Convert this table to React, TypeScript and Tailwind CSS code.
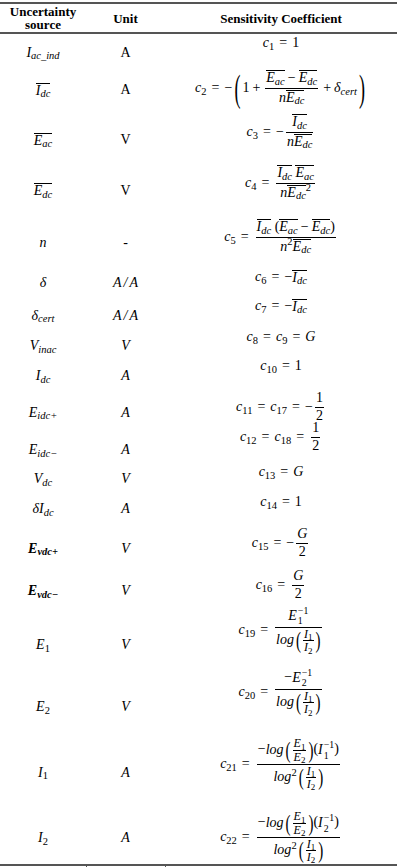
import React from "react";

type N = React.ReactNode;

const X = ({ b, s, bold }: { b: N; s?: N; bold?: boolean }) => (
  <span className={bold ? "italic font-bold" : "italic"}>
    {b}
    {s !== undefined && <sub>{s}</sub>}
  </span>
);
const U = ({ children }: { children: N }) => <span className="not-italic">{children}</span>;
const O = ({ children }: { children: N }) => (
  <span className="inline-block border-t border-black leading-none">{children}</span>
);
const Eq = () => <span className="mx-[5px] not-italic">=</span>;
const Op = ({ c }: { c: string }) => <span className="mx-[3px] not-italic">{c}</span>;
const M = "\u2212";

const F = ({ n, d, small, tight }: { n: N; d: N; small?: boolean; tight?: boolean }) => (
  <span
    className={
      "inline-flex flex-col items-center mx-[2px] align-middle " +
      (small ? "text-[12px] leading-[1.05]" : tight ? "leading-[1.15]" : "leading-[1.3]")
    }
  >
    <span className="px-[1px] whitespace-nowrap">{n}</span>
    <span className="self-stretch border-t border-black" />
    <span className="px-[1px] whitespace-nowrap">{d}</span>
  </span>
);

const BP = ({ c, cls }: { c: string; cls: string }) => (
  <span className={"inline-block not-italic leading-none " + cls}>{c}</span>
);

const P = ({ children }: { children: N }) => (
  <span className="inline-flex items-center align-middle">
    <BP c="(" cls="text-[15px] scale-y-[1.6]" />
    {children}
    <BP c=")" cls="text-[15px] scale-y-[1.6]" />
  </span>
);

const SS = ({ b, sub, sup }: { b: N; sub: N; sup: N }) => (
  <span className="italic">
    {b}
    <span className="inline-flex flex-col align-[0.55em] text-[0.7em] leading-[1.05] not-italic ml-[1px]">
      <span>{sup}</span>
      <span>{sub}</span>
    </span>
  </span>
);

const Fm = ({ children }: { children: N }) => (
  <span className="inline-flex items-center whitespace-nowrap text-[14px]">{children}</span>
);

const C = ({ k }: { k: string }) => <X b="c" s={<U>{k}</U>} />;

const AA = () => (
  <i>
    A<span className="mx-[2px]">/</span>A
  </i>
);

const Idc = () => (
  <O>
    <X b="I" s="dc" />
  </O>
);
const Eac = () => (
  <O>
    <X b="E" s="ac" />
  </O>
);
const Edc = () => (
  <O>
    <X b="E" s="dc" />
  </O>
);
const I1I2 = () => (
  <P>
    <F small n={<X b="I" s={<U>1</U>} />} d={<X b="I" s={<U>2</U>} />} />
  </P>
);
const E1E2 = () => (
  <P>
    <F small n={<X b="E" s={<U>1</U>} />} d={<X b="E" s={<U>2</U>} />} />
  </P>
);
const Log = () => <i className="mr-[2px]">log</i>;

type Row = { h: string; l: N; lp: string; u: N; f: N; fp: string };

const rows: Row[] = [
  {
    h: "h-[37px]",
    l: <X b="I" s="ac_ind" />,
    lp: "",
    u: <U>A</U>,
    f: (
      <Fm>
        <C k="1" />
        <Eq />
        <U>1</U>
      </Fm>
    ),
    fp: "pb-[19px]",
  },
  {
    h: "h-[44px]",
    l: <Idc />,
    lp: "pb-[6px]",
    u: <U>A</U>,
    f: (
      <Fm>
        <C k="2" />
        <Eq />
        <U>{M}</U>
        <BP c="(" cls="text-[18px] scale-y-[2.1] mx-[2px]" />
        <U>1</U>
        <Op c="+" />
        <F
          n={
            <>
              <Eac />
              <Op c={M} />
              <Edc />
            </>
          }
          d={
            <>
              <i>n</i>
              <Edc />
            </>
          }
        />
        <Op c="+" />
        <X b={"\u03b4"} s="cert" />
        <BP c=")" cls="text-[18px] scale-y-[2.1] mx-[2px]" />
      </Fm>
    ),
    fp: "pb-[10px]",
  },
  {
    h: "h-[50px]",
    l: <Eac />,
    lp: "",
    u: <U>V</U>,
    f: (
      <Fm>
        <C k="3" />
        <Eq />
        <U>{M}</U>
        <F
          n={<Idc />}
          d={
            <>
              <i>n</i>
              <Edc />
            </>
          }
        />
      </Fm>
    ),
    fp: "pb-[16px]",
  },
  {
    h: "h-[51px]",
    l: <Edc />,
    lp: "",
    u: <U>V</U>,
    f: (
      <Fm>
        <C k="4" />
        <Eq />
        <F
          n={
            <>
              <Idc /> <Eac />
            </>
          }
          d={
            <>
              <i>n</i>
              <Edc />
              <sup>2</sup>
            </>
          }
        />
      </Fm>
    ),
    fp: "pb-[15px]",
  },
  {
    h: "h-[47px]",
    l: <i>n</i>,
    lp: "pt-[7px]",
    u: <U>-</U>,
    f: (
      <Fm>
        <C k="5" />
        <Eq />
        <F
          n={
            <>
              <Idc /> <U>(</U>
              <Eac />
              <Op c={M} />
              <Edc />
              <U>)</U>
            </>
          }
          d={
            <>
              <i>n</i>
              <sup>2</sup>
              <Edc />
            </>
          }
        />
      </Fm>
    ),
    fp: "pb-[5px]",
  },
  {
    h: "h-[37px]",
    l: <i>{"\u03b4"}</i>,
    lp: "pt-[3px]",
    u: <AA />,
    f: (
      <Fm>
        <C k="6" />
        <Eq />
        <U>{M}</U>
        <Idc />
      </Fm>
    ),
    fp: "pb-[9px]",
  },
  {
    h: "h-[31px]",
    l: <X b={"\u03b4"} s="cert" />,
    lp: "",
    u: <AA />,
    f: (
      <Fm>
        <C k="7" />
        <Eq />
        <U>{M}</U>
        <Idc />
      </Fm>
    ),
    fp: "pb-[19px]",
  },
  {
    h: "h-[30px]",
    l: <X b="V" s="inac" />,
    lp: "",
    u: <i>V</i>,
    f: (
      <Fm>
        <C k="8" />
        <Eq />
        <C k="9" />
        <Eq />
        <i>G</i>
      </Fm>
    ),
    fp: "pb-[18px]",
  },
  {
    h: "h-[33px]",
    l: <X b="I" s="dc" />,
    lp: "pb-[3px]",
    u: <i>A</i>,
    f: (
      <Fm>
        <C k="10" />
        <Eq />
        <U>1</U>
      </Fm>
    ),
    fp: "pb-[23px]",
  },
  {
    h: "h-[37px]",
    l: <X b="E" s="idc+" />,
    lp: "",
    u: <i>A</i>,
    f: (
      <Fm>
        <C k="11" />
        <Eq />
        <C k="17" />
        <Eq />
        <U>{M}</U>
        <F tight n={<U>1</U>} d={<U>2</U>} />
      </Fm>
    ),
    fp: "pb-[11px]",
  },
  {
    h: "h-[33px]",
    l: <X b="E" s={"idc\u2212"} />,
    lp: "pt-[5px]",
    u: <i>A</i>,
    f: (
      <Fm>
        <C k="12" />
        <Eq />
        <C k="18" />
        <Eq />
        <F tight n={<U>1</U>} d={<U>2</U>} />
      </Fm>
    ),
    fp: "pb-[21px]",
  },
  {
    h: "h-[30px]",
    l: <X b="V" s="dc" />,
    lp: "",
    u: <i>V</i>,
    f: (
      <Fm>
        <C k="13" />
        <Eq />
        <i>G</i>
      </Fm>
    ),
    fp: "pb-[14px]",
  },
  {
    h: "h-[34px]",
    l: (
      <>
        <i>{"\u03b4"}</i>
        <X b="I" s="dc" />
      </>
    ),
    lp: "pb-[4px]",
    u: <i>A</i>,
    f: (
      <Fm>
        <C k="14" />
        <Eq />
        <U>1</U>
      </Fm>
    ),
    fp: "pb-[18px]",
  },
  {
    h: "h-[41px]",
    l: <X bold b="E" s="vdc+" />,
    lp: "",
    u: <i>V</i>,
    f: (
      <Fm>
        <C k="15" />
        <Eq />
        <U>{M}</U>
        <F tight n={<i>G</i>} d={<U>2</U>} />
      </Fm>
    ),
    fp: "pb-[11px]",
  },
  {
    h: "h-[49px]",
    l: <X bold b="E" s={"vdc\u2212"} />,
    lp: "pb-[5px]",
    u: <i>V</i>,
    f: (
      <Fm>
        <C k="16" />
        <Eq />
        <F tight n={<i>G</i>} d={<U>2</U>} />
      </Fm>
    ),
    fp: "pb-[17px]",
  },
  {
    h: "h-[58px]",
    l: <X b="E" s={<U>1</U>} />,
    lp: "pb-[4px]",
    u: <i>V</i>,
    f: (
      <Fm>
        <C k="19" />
        <Eq />
        <F
          n={<SS b="E" sub="1" sup={M + "1"} />}
          d={
            <>
              <Log />
              <I1I2 />
            </>
          }
        />
      </Fm>
    ),
    fp: "pb-[34px]",
  },
  {
    h: "h-[64px]",
    l: <X b="E" s={<U>2</U>} />,
    lp: "pb-[2px]",
    u: <i>V</i>,
    f: (
      <Fm>
        <C k="20" />
        <Eq />
        <F
          n={
            <>
              <U>{M}</U>
              <SS b="E" sub="2" sup={M + "1"} />
            </>
          }
          d={
            <>
              <Log />
              <I1I2 />
            </>
          }
        />
      </Fm>
    ),
    fp: "pb-[32px]",
  },
  {
    h: "h-[65px]",
    l: <X b="I" s={<U>1</U>} />,
    lp: "",
    u: <i>A</i>,
    f: (
      <Fm>
        <C k="21" />
        <Eq />
        <F
          n={
            <>
              <U>{M}</U>
              <Log />
              <E1E2 />
              <U>(</U>
              <SS b="I" sub="1" sup={M + "1"} />
              <U>)</U>
            </>
          }
          d={
            <>
              <i>log</i>
              <sup className="mr-[2px]">2</sup>
              <I1I2 />
            </>
          }
        />
      </Fm>
    ),
    fp: "pb-[17px]",
  },
  {
    h: "h-[59px]",
    l: <X b="I" s={<U>2</U>} />,
    lp: "pt-[7px]",
    u: <i>A</i>,
    f: (
      <Fm>
        <C k="22" />
        <Eq />
        <F
          n={
            <>
              <U>{M}</U>
              <Log />
              <E1E2 />
              <U>(</U>
              <SS b="I" sub="2" sup={M + "1"} />
              <U>)</U>
            </>
          }
          d={
            <>
              <i>log</i>
              <sup className="mr-[2px]">2</sup>
              <I1I2 />
            </>
          }
        />
      </Fm>
    ),
    fp: "pt-[5px]",
  },
];

export default function App() {
  return (
    <div className="w-[400px] h-[867px] bg-white overflow-hidden font-['Liberation_Serif',serif] text-black">
      <div className="w-[397px] pt-[2px]">
        <div className="border-t-2 border-[#555] h-[30px] flex text-[13px] font-bold leading-[13px] text-center">
          <div className="w-[86px] flex flex-col items-center justify-center">
            <span>Uncertainty</span>
            <span>source</span>
          </div>
          <div className="w-[79px] flex items-center justify-center">Unit</div>
          <div className="flex-1 flex items-center justify-center">Sensitivity Coefficient</div>
        </div>
        <div className="border-t-2 border-b-2 border-[#555]">
          {rows.map((r, i) => (
            <div key={i} className={"flex text-[14px] leading-none " + r.h}>
              <div className={"w-[86px] flex items-center justify-center whitespace-nowrap " + r.lp}>{r.l}</div>
              <div className={"w-[79px] flex items-center justify-center whitespace-nowrap " + r.lp}>{r.u}</div>
              <div className={"flex-1 flex items-center justify-center " + r.fp}>{r.f}</div>
            </div>
          ))}
        </div>
        <div className="flex h-[1px]">
          <div className="w-[86px]" />
          <div className="w-[79px] border-l border-[#555]" />
          <div className="flex-1 border-l border-[#555]" />
        </div>
      </div>
    </div>
  );
}
